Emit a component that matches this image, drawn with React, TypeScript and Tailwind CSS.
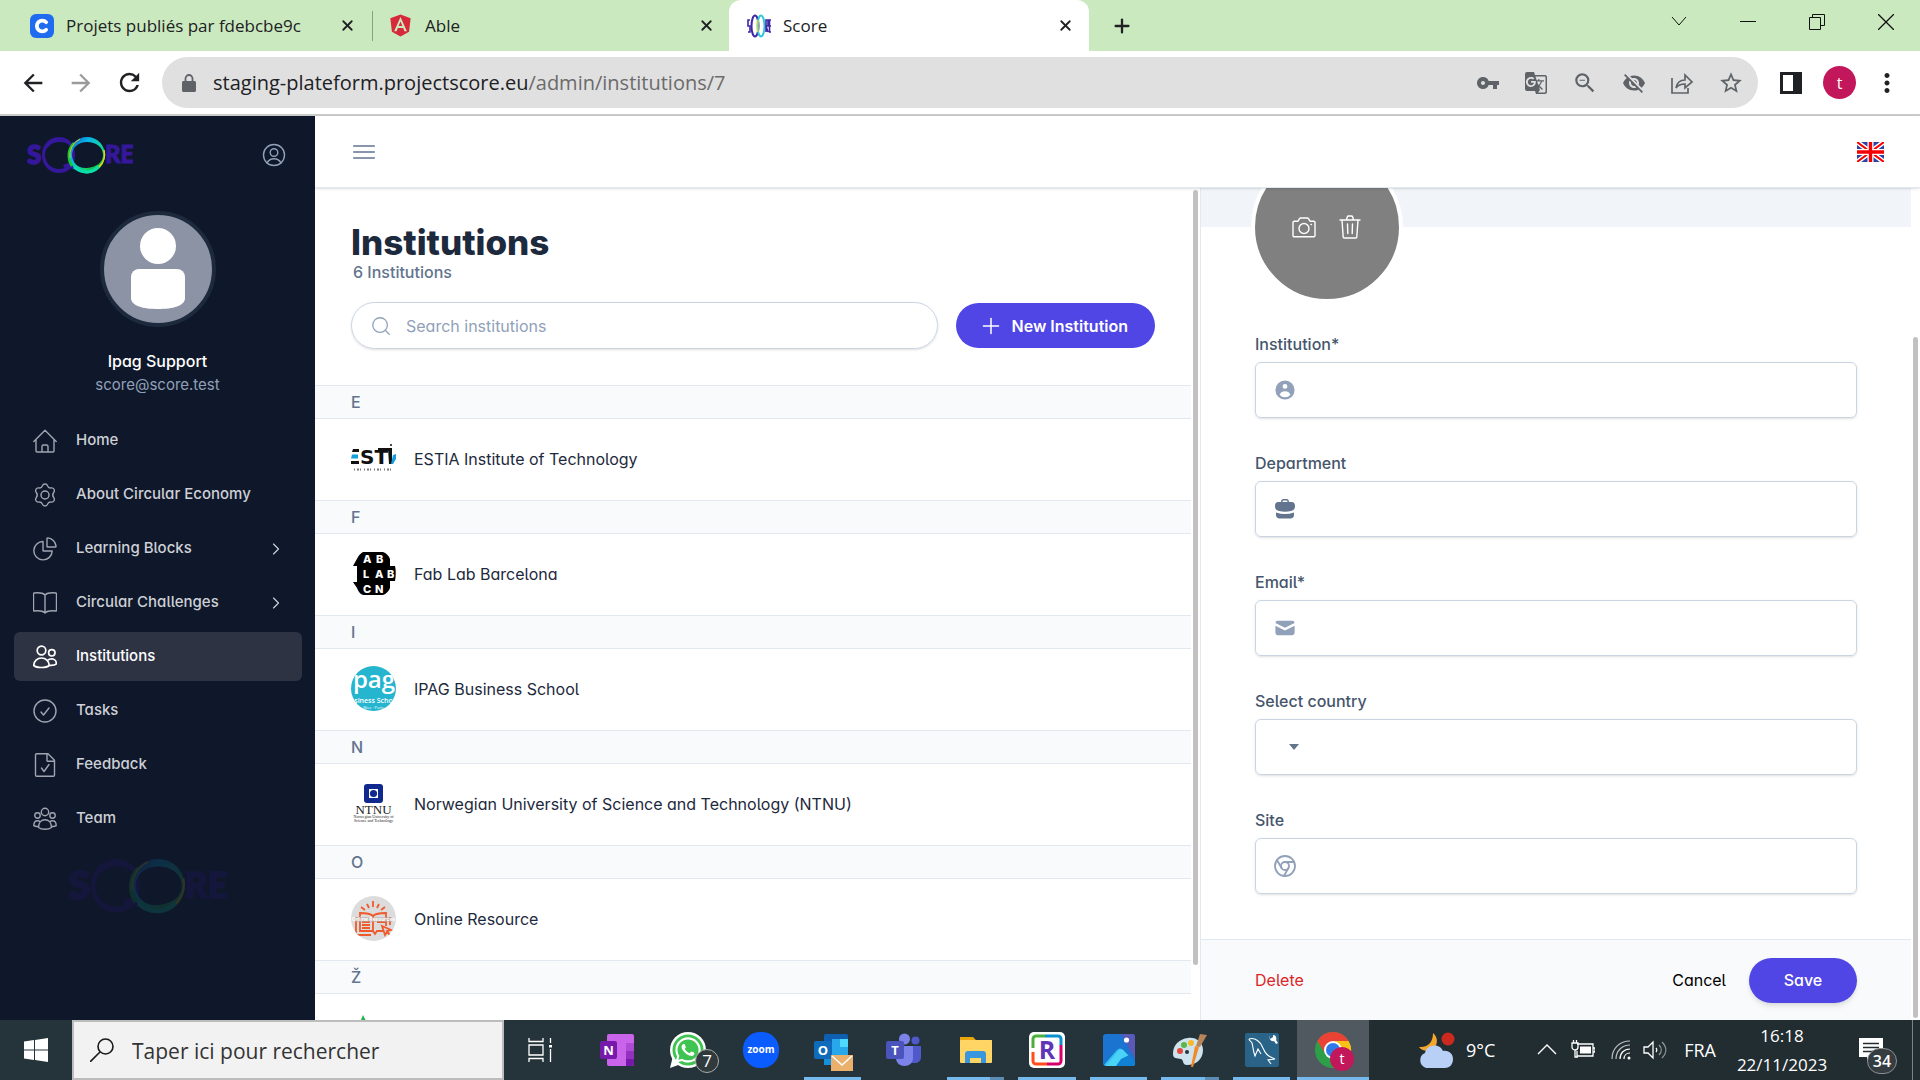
import React, { useState } from 'react';
import {
  MdArrowBack,
  MdArrowForward,
  MdRefresh,
  MdVpnKey,
  MdGTranslate,
  MdVisibilityOff,
  MdStarBorder,
  MdMoreVert,
  MdZoomOut,
} from 'react-icons/md';
import { HiMail, HiUserCircle } from 'react-icons/hi';
import { FaAngular, FaWhatsapp } from 'react-icons/fa';
import { Chrome, ChevronRight, Plus, Search, X } from 'lucide-react';

const ScoreLogo = ({ className }: { className: string }) => (
  <svg viewBox="0 0 106 37" className={className} role="img" aria-label="Score">
    <defs>
      <linearGradient id="ringCool" x1="0" y1="0" x2="1" y2="1">
        <stop offset="0" stopColor="#1d3fc4" />
        <stop offset="0.3" stopColor="#06b6e8" />
        <stop offset="0.55" stopColor="#12d4a8" />
        <stop offset="0.8" stopColor="#12c832" />
        <stop offset="1" stopColor="#e8dc1e" />
      </linearGradient>
    </defs>
    <g fill="#34179a" stroke="#34179a" fontFamily="Lato, sans-serif" fontWeight="900">
      <text x="0" y="27" fontSize="26" strokeWidth="1.500">S</text>
      <text x="78" y="26" fontSize="24" strokeWidth="1">RE</text>
    </g>
    <path
      fillRule="evenodd"
      fill="#34179a"
      d="M32 0c9 0 16 6 16 18S41 36 32 36 15 29 15 18 23 0 32 0zm1 5c-9 0-15 6-15 13s6 14 14 14 13-5 13-14S41 5 33 5z"
    />
    <path fill="#34179a" d="M36 28l10-4 1 9-3-2-5 3z" />
    <path
      fillRule="evenodd"
      fill="url(#ringCool)"
      d="M60 0c10 0 18 8 18 18s-8 18.500-18 18.500S42 28 42 18 50 0 60 0zm0 5c-9 0-15 6-15 13s6 14 15 13 16-5 16-13S69 5 60 5z"
    />
    <path d="M45 29A18 18 0 0 1 47 6" fill="none" stroke="#16c832" strokeWidth="2.500" />
    <path d="M43 21A18 18 0 0 1 53 2" fill="none" stroke="#e0c422" strokeWidth="1" />
    <path d="M47 30a18 18 0 0 0 13 5 17 17 0 0 0 12-6" fill="none" stroke="#0cdcb0" strokeWidth="3" />
    <path d="M77 13a18 18 0 0 1-5 17" fill="none" stroke="#e8d41e" strokeWidth="1.500" />
  </svg>
);

const LineIcon = ({ children, className = 'w-6 h-6' }: { children: React.ReactNode; className?: string }) => (
  <svg
    viewBox="0 0 24 24"
    className={className}
    fill="none"
    stroke="currentColor"
    strokeWidth="1.400"
    strokeLinecap="round"
    strokeLinejoin="round"
  >
    {children}
  </svg>
);

const navItems = [
  {
    label: 'Home',
    icon: (
      <LineIcon>
        <path d="M.8 12.500L12 1.200l11.200 11.300M3 10.500V22c0 .6.400 1 1 1h16c.6 0 1-.4 1-1V10.500M9 23v-5.500c0-1 .6-1.500 1.500-1.500h3c.9 0 1.500.5 1.500 1.500V23" />
      </LineIcon>
    ),
  },
  {
    label: 'About Circular Economy',
    icon: (
      <LineIcon>
        <circle cx="12" cy="12" r="4" />
        <path d="M9.400 2.900C10.200.400 13.800.400 14.600 2.900c.5 1.500 2 2.300 3.500 2 2.600-.5 4.400 2.600 2.600 4.600-1.100 1.400-1.100 3.600 0 5 1.800 2 0 5.100-2.600 4.600-1.500-.3-3 .5-3.500 2-.8 2.500-4.400 2.500-5.200 0-.5-1.500-2-2.300-3.500-2-2.600.5-4.400-2.600-2.600-4.600 1.100-1.400 1.100-3.600 0-5-1.800-2 0-5.100 2.600-4.600 1.500.3 3-.5 3.500-2z" />
      </LineIcon>
    ),
  },
  {
    label: 'Learning Blocks',
    arrow: true,
    icon: (
      <LineIcon>
        <path d="M10 4.500a9.200 9.200 0 1 0 9.200 9.500H10.500c-.3 0-.5-.2-.5-.5z" />
        <path d="M14 1.500c0-.4.300-.6.700-.6 4.300.3 7.900 4 8.400 8.400 0 .4-.2.700-.6.700h-8c-.3 0-.5-.2-.5-.5z" />
      </LineIcon>
    ),
  },
  {
    label: 'Circular Challenges',
    arrow: true,
    icon: (
      <LineIcon>
        <path d="M12 4v18M12 4C9.500 1.500 5.500 1.500 1 2c-.3 0-.5.200-.5.500v17c0 .3.200.5.500.5C5.500 19.500 9.500 19.500 12 22c2.500-2.500 6.500-2.500 11-2 .3 0 .5-.2.500-.5v-17c0-.3-.2-.5-.5-.5-4.500-.5-8.500-.5-11 2z" />
      </LineIcon>
    ),
  },
  {
    label: 'Institutions',
    active: true,
    icon: (
      <LineIcon>
        <g strokeWidth="1.700">
          <circle cx="8.500" cy="5.500" r="4.300" />
          <circle cx="18.800" cy="7.800" r="3.200" />
          <path d="M.8 20.500c0-4.500 3.500-7.500 7.700-7.500s7.700 3 7.700 7.500c-1.500 1.300-4.500 2-7.700 2s-6.200-.7-7.700-2z" />
          <path d="M14.500 15.500c1.200-1.200 2.800-1.600 4.300-1.600 2.600 0 4.600 2 4.600 5-1.500 1.500-4 1.700-7 1.500" />
        </g>
      </LineIcon>
    ),
  },
  {
    label: 'Tasks',
    icon: (
      <LineIcon>
        <circle cx="12" cy="12" r="11" />
        <path d="M8 13l2.500 3L16 9" />
      </LineIcon>
    ),
  },
  {
    label: 'Feedback',
    icon: (
      <LineIcon>
        <path d="M3.500.800H15l6.500 6.500V22c0 .7-.5 1.200-1.200 1.200H3.700c-.7 0-1.200-.5-1.200-1.200V2c0-.7.400-1.200 1-1.200zM14 1v6.500c0 .5.300.800.800.800h6.500M8.500 15l2.500 3.500 5-7" />
      </LineIcon>
    ),
  },
  {
    label: 'Team',
    icon: (
      <LineIcon>
        <circle cx="12" cy="5" r="3.700" />
        <circle cx="4.500" cy="8.500" r="2.700" />
        <circle cx="19.500" cy="8.500" r="2.700" />
        <path d="M5.500 20.500c0-4.500 2.500-7.700 6.500-7.700s6.500 3.200 6.500 7.700c-1.500 1.200-4 1.700-6.500 1.700s-5-.5-6.500-1.700zM5.500 19.500c-2 .2-3.500 0-4.700-.8 0-3 1.500-4.900 3.700-4.900 1 0 1.900.3 2.600 1M18.500 19.500c2 .2 3.500 0 4.700-.8 0-3-1.500-4.900-3.700-4.900-1 0-1.900.3-2.600 1" />
      </LineIcon>
    ),
  },
];

const EstiaLogo = () => (
  <svg viewBox="0 0 45 45" className="w-[45px] h-[45px] shrink-0">
    <text x="9" y="28" fontSize="20" fill="#111" fontFamily="DejaVu Sans, sans-serif" fontWeight="700">ST</text>
    <path d="M2 13h6v3H1zM0 25h8v3H0z" fill="#111" />
    <path d="M1 18.500h6v4H0z" fill="#129fe0" />
    <path d="M27 12h13v3H27zM37 12h4v16h-3z" fill="#111" />
    <circle cx="40" cy="9" r="1" fill="#111" />
    <path d="M42 19l3-1v5l-3 5h-2z" fill="#129fe0" />
    <path d="M3 33.500h38" stroke="#777" strokeWidth="2" strokeDasharray="1 2 2 1 1 3" />
  </svg>
);

const FabLabLogo = () => (
  <svg viewBox="0 0 45 45" className="w-[45px] h-[45px] shrink-0">
    <path d="M12 1h20c3 1 6 4 7 7v7h5c1 4 1 10 0 15h-5v7c-1 3-4 6-7 7H12c-3-1-5-4-6-7l-4-6h4V15H2l5-9c1-2 3-4 5-5z" fill="#000" />
    <g fill="#fff" fontFamily="Inter, sans-serif" fontWeight="800" fontSize="11">
      <text x="12" y="12">A</text>
      <text x="25" y="12">B</text>
      <text x="12" y="27">L</text>
      <text x="24" y="27">A</text>
      <text x="36" y="27">B</text>
      <text x="12" y="42">C</text>
      <text x="24" y="42">N</text>
    </g>
  </svg>
);

const IpagLogo = () => (
  <svg viewBox="0 0 45 45" className="w-[45px] h-[45px] shrink-0 rounded-full bg-[#26b5cf]">
    <g fill="#fff" fontFamily="Open Sans, sans-serif" textAnchor="middle">
      <text x="23" y="22" fontSize="24" fontWeight="600">pag</text>
      <text x="22.500" y="37" fontSize="7" fontWeight="600">siness Scho</text>
      <text x="22.500" y="43" fontSize="4">Nice · Paris</text>
    </g>
  </svg>
);

const NtnuLogo = () => (
  <svg viewBox="0 0 45 45" className="w-[45px] h-[45px] shrink-0">
    <rect x="13" y="3" width="19" height="19" rx="3" fill="#10298e" />
    <rect x="18" y="8" width="9" height="9" fill="#fff" />
    <circle cx="22.500" cy="12.500" r="3.600" fill="#10298e" />
    <g fill="#222" fontFamily="Liberation Serif, serif" textAnchor="middle">
      <text x="22.500" y="33" fontSize="13">NTNU</text>
      <text x="22.500" y="37" fontSize="4">Norwegian University of</text>
      <text x="22.500" y="41" fontSize="4">Science and Technology</text>
    </g>
  </svg>
);

const OnlineLogo = () => (
  <svg viewBox="0 0 45 45" className="w-[45px] h-[45px] shrink-0 rounded-full bg-[#dcdcdc]">
    <g fill="none" stroke="#f0592b" strokeWidth="1.800">
      <path d="M22 5v6M16 8l2 4M28 8l-2 4M10 11l4 3M34 11l-4 3" />
      <path d="M22 20c-3-3-8-3-13-3v18h13l2 3 2-3h6M22 20c3-3 8-3 13-3v13M5 21v18h15M39 21v8M22 20v15M11 26h8M11 29h8M11 32h8M26 26h8" />
      <path d="M31 30l9 4-4 1 3 4-3-3-2 3z" />
    </g>
    <path d="M4 21h37v5H4z" fill="#b5aca8" opacity="0.6" />
    <text x="22.500" y="25" fontSize="5" fontWeight="700" fill="#fff" textAnchor="middle" fontFamily="Inter, sans-serif">
      Online Resources
    </text>
  </svg>
);

const institutions = [
  { letter: 'E', name: 'ESTIA Institute of Technology', logo: <EstiaLogo /> },
  { letter: 'F', name: 'Fab Lab Barcelona', logo: <FabLabLogo /> },
  { letter: 'I', name: 'IPAG Business School', logo: <IpagLogo /> },
  { letter: 'N', name: 'Norwegian University of Science and Technology (NTNU)', logo: <NtnuLogo /> },
  { letter: 'O', name: 'Online Resource', logo: <OnlineLogo /> },
  {
    letter: 'Ž',
    name: '',
    logo: (
      <svg viewBox="0 0 45 45" className="w-[45px] h-[45px] shrink-0">
        <path d="M12 4l4 8-8 2z" fill="#22b14c" />
      </svg>
    ),
  },
];

const BrowserChrome = () => (
  <header className="shrink-0 text-[#202124] font-['Open_Sans',sans-serif]">
    <div className="flex h-[51px] bg-[#cbe9bf] text-[17px]">
      <div className="flex items-center w-[373px] pl-[30px] pr-[17px] relative">
        <span className="flex items-center justify-center w-6 h-6 rounded-md bg-[#1f6cf0]">
          <svg viewBox="0 0 24 24" className="w-5 h-5" fill="none" stroke="#fff" strokeWidth="4.500" strokeLinecap="round">
            <path d="M17 7.500a6.500 6.500 0 1 0 0 9" />
          </svg>
        </span>
        <span className="ml-3 flex-1 whitespace-nowrap">Projets publiés par fdebcbe9c</span>
        <button aria-label="Close tab">
          <X size={17} strokeWidth={2.5} />
        </button>
        <span className="absolute right-0 top-[11px] h-[30px] w-px bg-[#8aa182]" />
      </div>
      <div className="flex items-center w-[356px] pl-[15px] pr-3.5">
        <FaAngular size={25} color="#d6293a" />
        <span className="ml-3 flex-1">Able</span>
        <button aria-label="Close tab">
          <X size={17} strokeWidth={2.5} />
        </button>
      </div>
      <div className="bg-white">
        <div className="h-full w-2 rounded-br-lg bg-[#cbe9bf] -ml-2" />
      </div>
      <div className="flex items-center w-[360px] pl-[18px] pr-[15px] bg-white rounded-t-xl">
        <svg viewBox="0 0 24 24" className="w-6 h-6" fill="none">
          <ellipse cx="8" cy="12" rx="3.500" ry="10.500" stroke="#3f27a5" strokeWidth="2" />
          <ellipse cx="14" cy="12" rx="3.500" ry="10.500" stroke="#30c8d8" strokeWidth="2" />
          <path d="M10.800 6v12" stroke="#c6d83a" strokeWidth="1.500" />
          <path d="M3 6H1v6h2v6H1M19 18V6h2v6h-2l2 6M24 6h-1.500v12H24M22.500 12H24" stroke="#3f27a5" strokeWidth="1.600" />
        </svg>
        <span className="ml-3 flex-1">Score</span>
        <button aria-label="Close tab">
          <X size={17} strokeWidth={2.5} />
        </button>
      </div>
      <button aria-label="New tab" className="ml-[22px]">
        <Plus size={22} strokeWidth={2.5} />
      </button>
      <div className="ml-auto flex items-start pt-3.5 pr-[26px] gap-[53px]">
        <button aria-label="Search tabs">
          <svg viewBox="0 0 16 16" className="w-4 h-4" fill="none" stroke="#111">
            <path d="M1 3l7 8 7-8" />
          </svg>
        </button>
        <button aria-label="Minimize">
          <svg viewBox="0 0 16 16" className="w-4 h-4" fill="none" stroke="#111">
            <path d="M0 7.500h16" />
          </svg>
        </button>
        <button aria-label="Restore">
          <svg viewBox="0 0 16 16" className="w-4 h-4" fill="none" stroke="#111">
            <path d="M.5 3.500h11v12H.5zM3.500 3.500v-3h12v11h-4" />
          </svg>
        </button>
        <button aria-label="Close">
          <svg viewBox="0 0 16 16" className="w-4 h-4" fill="none" stroke="#111" strokeWidth="1.300">
            <path d="M0 0l16 16M16 0L0 16" />
          </svg>
        </button>
      </div>
    </div>
    <div className="flex items-center h-[65px] bg-white border-b-2 border-[#cbcbcb] pl-[19px]">
      <button aria-label="Back" className="w-12">
        <MdArrowBack size={28} />
      </button>
      <button aria-label="Forward" className="w-12 text-[#9b9b9b]">
        <MdArrowForward size={28} />
      </button>
      <button aria-label="Reload" className="w-[47px]">
        <MdRefresh size={29} />
      </button>
      <div className="flex items-center flex-1 h-[51px] rounded-full bg-[#e0e0e0] pl-5 pr-3.5 text-[#5f6368]">
        <svg viewBox="0 0 14 18" className="w-3.5 h-[18px]">
          <path d="M1.500 7h11c.8 0 1.500.6 1.500 1.500v8c0 .8-.7 1.500-1.500 1.500h-11C.7 18 0 17.300 0 16.500v-8C0 7.600.7 7 1.500 7z" fill="currentColor" />
          <path d="M3.500 8V4.500a3.500 3.500 0 0 1 7 0V8" fill="none" stroke="currentColor" strokeWidth="1.800" />
        </svg>
        <div className="ml-[17px] flex-1 text-xl whitespace-nowrap text-[#6b6b6b]">
          <span className="text-[#202124]">staging-plateform.projectscore.eu</span>/admin/institutions/7
        </div>
        <div className="flex items-center gap-6">
          <MdVpnKey size={24} />
          <MdGTranslate size={24} />
          <MdZoomOut size={26} />
          <MdVisibilityOff size={24} />
          <svg viewBox="0 0 24 24" className="w-6 h-6" fill="none" stroke="currentColor" strokeWidth="1.700">
            <path d="M2 7v15h16v-5M6 17c1-6 4-8 9-8V4l7 7-7 6v-4c-4 0-7 1-9 4z" />
          </svg>
          <MdStarBorder size={26} />
        </div>
      </div>
      <svg viewBox="0 0 22 22" className="w-[22px] h-[22px] ml-[22px]">
        <path d="M0 0h22v22H0zM3 3v16h10V3z" fillRule="evenodd" fill="#202124" />
      </svg>
      <span className="flex items-center justify-center w-[33px] h-[33px] ml-[21px] rounded-full bg-[#c2185b] text-white text-base">
        t
      </span>
      <button aria-label="Menu" className="ml-4 mr-[18px]">
        <MdMoreVert size={30} />
      </button>
    </div>
  </header>
);

const Sidebar = () => (
  <aside className="flex flex-col w-[315px] shrink-0 bg-[#0f172a] pt-[21px] overflow-hidden">
    <div className="flex items-center justify-between h-[37px] pl-[27px] pr-[29px]">
      <ScoreLogo className="w-[106px] h-[37px]" />
      <button aria-label="Profile" className="pb-0.5 text-slate-400">
        <LineIcon>
          <circle cx="12" cy="12" r="10.500" />
          <circle cx="12" cy="9.500" r="3.800" />
          <path d="M5 20c1.500-3 4-4.200 7-4.200s5.500 1.200 7 4.200" />
        </LineIcon>
      </button>
    </div>
    <div className="flex flex-col items-center mt-[37px]">
      <svg viewBox="0 0 108 108" className="w-[116px] h-[116px] rounded-full border-4 border-slate-800 bg-[#8b93a5]">
        <circle cx="54" cy="31" r="18" fill="#fff" />
        <path d="M35 54h38a8 8 0 0 1 8 8v21c0 8-12 11-27 11s-27-3-27-11V62a8 8 0 0 1 8-8z" fill="#fff" />
      </svg>
      <div className="mt-[22px] leading-6 font-medium text-white">Ipag Support</div>
      <div className="leading-6 text-[15px] text-slate-400">score@score.test</div>
    </div>
    <nav className="flex flex-col gap-[5px] mt-[19px] pl-3.5 pr-[13px]">
      {navItems.map((item) => (
        <a
          key={item.label}
          href="#"
          className={`flex items-center h-[49px] pl-[19px] pr-4 rounded-md text-[15px] font-medium ${
            item.active ? 'bg-[#2e3344] text-white' : 'text-[#cdd0d6]'
          }`}
        >
          <span className={item.active ? '' : 'text-[#a0a5b0]'}>{item.icon}</span>
          <span className="ml-[19px] flex-1">{item.label}</span>
          {item.arrow && <ChevronRight size={20} strokeWidth={1.4} />}
        </a>
      ))}
    </nav>
    <div className="mt-4 pl-[68px] opacity-15">
      <ScoreLogo className="w-[159px] h-[55px]" />
    </div>
  </aside>
);

const TopBar = () => (
  <div className="relative z-10 flex items-center justify-between h-[72px] shrink-0 bg-white border-b border-slate-200 shadow-sm pl-9 pr-9">
    <button aria-label="Toggle navigation">
      <LineIcon className="w-[26px] h-[26px] text-slate-500">
        <path d="M2.500 6.500h19M2.500 12h19M2.500 17.500h19" />
      </LineIcon>
    </button>
    <button aria-label="Language">
      <svg viewBox="0 0 27 20" className="w-[27px] h-5">
        <path d="M0 0h27v20H0z" fill="#2e42a5" />
        <path d="M0 0l27 20M27 0L0 20" stroke="#fff" strokeWidth="5" />
        <path d="M0 0l27 20M27 0L0 20" stroke="#f50100" strokeWidth="2" />
        <path d="M13.500 0v20M0 10h27" stroke="#fff" strokeWidth="6" />
        <path d="M13.500 0v20M0 10h27" stroke="#f50100" strokeWidth="3.400" />
      </svg>
    </button>
  </div>
);

const InstitutionList = () => {
  const [query, setQuery] = useState('');

  return (
    <section className="relative flex-1 min-w-0 pr-[9px] overflow-hidden">
      <div className="pt-[34px] pl-9 pr-9">
        <h1 className="text-[35px] leading-10 font-extrabold text-slate-800">Institutions</h1>
        <p className="pl-0.5 leading-5 font-medium text-slate-500">6 Institutions</p>
        <div className="flex items-center gap-[18px] mt-5">
          <label className="flex items-center flex-1 h-[47px] rounded-full border border-slate-300 shadow-sm pl-[18px]">
            <Search size={22} strokeWidth={1.4} className="text-slate-400" />
            <input
              aria-label="Search institutions"
              placeholder="Search institutions"
              value={query}
              onChange={(e) => setQuery(e.target.value)}
              className="ml-3.5 flex-1 outline-none placeholder:text-slate-400"
            />
          </label>
          <button className="flex items-center h-[45px] pl-[22px] pr-[27px] rounded-full bg-[#4f46e5] text-white font-semibold">
            <Plus size={26} strokeWidth={1.4} />
            <span className="ml-2">New Institution</span>
          </button>
        </div>
      </div>
      <div className="mt-9">
        {institutions.map((item) => (
          <div key={item.letter}>
            <div className="h-[34px] pl-9 leading-8 font-medium text-slate-500 bg-slate-50 border-y border-slate-200">
              {item.letter}
            </div>
            <a href="#" className="flex items-center h-[81px] pb-0.5 pl-9 gap-[18px] text-slate-800">
              {item.logo}
              <span>{item.name}</span>
            </a>
          </div>
        ))}
      </div>
      <div className="absolute right-[2px] top-0.5 w-[5px] h-[775px] rounded-full bg-[#c2c0c0]" />
    </section>
  );
};

const fields = [
  { id: 'institution', label: 'Institution*', icon: <HiUserCircle size={24} /> },
  {
    id: 'department',
    label: 'Department',
    icon: (
      <svg viewBox="0 0 24 24" className="w-6 h-6 text-slate-500" fill="currentColor">
        <path d="M8 5c0-2 1-3 2.500-3h3C15 2 16 3 16 5h2.500C21 5 22 6.500 22 9c0 3-1.500 4.500-4 5-4 1-8 1-12 0-2.500-.5-4-2-4-5 0-2.500 1-4 3.500-4zm1.500 0h5c0-1-.3-1.500-1-1.500h-3c-.7 0-1 .5-1 1.500z" />
        <path d="M3 15.500c6 2 12 2 18 0V18c0 2-1.500 3.500-3.500 3.500h-11C4.500 21.500 3 20 3 18z" />
      </svg>
    ),
  },
  { id: 'email', label: 'Email*', icon: <HiMail size={24} /> },
  { id: 'country', label: 'Select country', select: true },
  { id: 'site', label: 'Site', icon: <Chrome size={24} strokeWidth={1.8} /> },
];

const InstitutionForm = () => (
  <section className="relative flex flex-col w-[720px] shrink-0 pr-[9px] border-l border-slate-200 overflow-hidden">
    <div className="h-[39px] shrink-0 bg-slate-100" />
    <div className="px-[50px] -mt-[76px]">
      <div className="flex items-center justify-center gap-[22px] w-[152px] h-[152px] border-4 border-white rounded-full bg-[#808080] text-white">
        <button aria-label="Upload photo">
          <LineIcon>
            <path d="M1 7.500c0-.8.500-1.300 1.300-1.300H6l1.500-2.500c.3-.5.600-.7 1.200-.7h6.600c.6 0 .9.200 1.200.7L18 6.200h3.700c.8 0 1.300.5 1.300 1.300v13c0 .8-.5 1.300-1.300 1.300H2.300c-.8 0-1.300-.5-1.300-1.300z" />
            <circle cx="12" cy="13.500" r="5" />
            <path d="M19 9.500h.5" />
          </LineIcon>
        </button>
        <button aria-label="Delete photo">
          <LineIcon>
            <path d="M2 5h20M4 5l1.200 17c0 .6.500 1 1.100 1h11.400c.6 0 1.100-.4 1.100-1L20 5M8.500 5l.8-3c.2-.6.600-1 1.200-1h3c.6 0 1 .4 1.200 1l.8 3M9.500 9l.3 9.500M14.500 9l-.3 9.500" />
          </LineIcon>
        </button>
      </div>
    </div>
    <form className="flex flex-col gap-[33px] pt-[29px] px-[54px]">
      {fields.map((field) => (
        <div key={field.id}>
          <label htmlFor={field.id} className="block leading-6 mb-1.5 font-medium text-slate-600">
            {field.label}
          </label>
          <div className="flex items-center h-14 rounded-md border border-slate-300 shadow-sm pl-[17px] text-slate-400">
            {field.select ? (
              <>
                <svg viewBox="0 0 10 6" className="w-2.5 h-1.5 ml-4">
                  <path d="M0 0h10L5 6z" fill="#64748b" />
                </svg>
                <select id={field.id} className="flex-1 h-full appearance-none outline-none">
                  <option value=""></option>
                </select>
              </>
            ) : (
              <>
                {field.icon}
                <input id={field.id} className="flex-1 h-full ml-3 outline-none" />
              </>
            )}
          </div>
        </div>
      ))}
    </form>
    <div className="flex items-center h-[81px] shrink-0 mt-auto px-[54px] border-t border-slate-200 bg-slate-50">
      <button className="text-[#dc2626]">Delete</button>
      <button className="ml-auto text-black">Cancel</button>
      <button className="ml-[23px] w-[108px] h-[45px] rounded-full bg-[#4f46e5] text-white font-medium shadow-md">
        Save
      </button>
    </div>
    <div className="absolute right-[2px] bottom-0.5 w-[5px] h-[681px] rounded-full bg-[#c2c0c0]" />
  </section>
);

const winFont = 'Open Sans, sans-serif';

const taskbarApps = [
  {
    name: 'OneNote',
    line: '',
    icon: (
      <>
        <rect x="9" y="4" width="27" height="32" rx="2" fill="#ca64ea" />
        <path d="M28 13h8v8h-8z" fill="#ae4bd5" />
        <path d="M28 21h8v8h-8z" fill="#9332bf" />
        <path d="M28 29h8v5a2 2 0 0 1-2 2h-6z" fill="#7719aa" />
        <rect x="2" y="11" width="17" height="18" rx="2" fill="#7719aa" />
        <text x="10.500" y="25" fontSize="13" fontWeight="700" fill="#fff" textAnchor="middle" fontFamily={winFont}>N</text>
      </>
    ),
  },
  {
    name: 'WhatsApp',
    line: '',
    icon: (
      <>
        <circle cx="19" cy="20" r="18" fill="#fff" />
        <path d="M1 38l3-12 8 8z" fill="#fff" />
        <circle cx="19" cy="20" r="15.500" fill="#3fc351" />
        <g transform="translate(4.500 5.500)">
          <FaWhatsapp size={29} color="#fff" />
        </g>
        <circle cx="38" cy="31" r="11.500" fill="#303a3d" stroke="#aaa" />
        <text x="38" y="37" fontSize="17" fill="#fff" textAnchor="middle" fontFamily={winFont}>7</text>
      </>
    ),
  },
  {
    name: 'Zoom',
    line: '',
    icon: (
      <>
        <rect x="2" y="2" width="36" height="36" rx="17" fill="#0b5cff" />
        <text x="20" y="23" fontSize="10" fontWeight="700" fill="#fff" textAnchor="middle" fontFamily={winFont}>zoom</text>
      </>
    ),
  },
  {
    name: 'Outlook',
    line: 'full',
    icon: (
      <>
        <rect x="12" y="4" width="24" height="31" rx="2" fill="#0f5fb0" />
        <path d="M20 9h16v18H20z" fill="#28a8ea" />
        <path d="M28 9h8v8h-8z" fill="#50d9ff" />
        <path d="M12 24l24 2v9H12z" fill="#1490df" />
        <rect x="2" y="11" width="18" height="18" rx="2" fill="#0f6cbd" />
        <text x="11" y="25" fontSize="13" fontWeight="700" fill="#fff" textAnchor="middle" fontFamily={winFont}>O</text>
        <path d="M19 25h22v16H19z" fill="#eab06c" />
        <path d="M20 26l10 9 10-9" fill="none" stroke="#fff" strokeWidth="1.500" />
      </>
    ),
  },
  {
    name: 'Teams',
    line: '',
    icon: (
      <>
        <circle cx="31.500" cy="10.500" r="4" fill="#5059c9" />
        <path d="M26 16h11v11c0 4-3 6-6 6h-5z" fill="#5059c9" />
        <circle cx="20.500" cy="9" r="5.500" fill="#7b83eb" />
        <path d="M12 16h17v12c0 5-4 8-8.500 8S12 33 12 28z" fill="#7b83eb" />
        <rect x="2" y="11" width="18" height="18" rx="2" fill="#4b53bc" />
        <text x="11" y="25" fontSize="13" fontWeight="700" fill="#fff" textAnchor="middle" fontFamily={winFont}>T</text>
      </>
    ),
  },
  {
    name: 'Explorer',
    line: 'split',
    icon: (
      <>
        <path d="M4 7h13l3 3h16v8H4z" fill="#e8a60c" />
        <rect x="4" y="10" width="32" height="23" rx="1" fill="#ffd665" />
        <path d="M9 24a3 3 0 0 1 3-3h15a3 3 0 0 1 3 3v9h-5v-5H14v5H9z" fill="#3a97dd" />
      </>
    ),
  },
  {
    name: 'R',
    line: 'full',
    icon: (
      <>
        <rect x="2" y="2" width="36" height="36" rx="5" fill="#fff" />
        <g fill="none" strokeWidth="3">
          <path d="M6 18V9a3 3 0 0 1 3-3h9" stroke="#4caf3c" />
          <path d="M18 6h13a3 3 0 0 1 3 3v6" stroke="#0a8fd0" />
          <path d="M34 15v16a3 3 0 0 1-3 3H20" stroke="#d6006c" />
          <path d="M20 34H9a3 3 0 0 1-3-3V22" stroke="#ff4c18" />
        </g>
        <text x="20" y="29" fontSize="25" fontWeight="700" fill="#6135b8" textAnchor="middle" fontFamily={winFont}>R</text>
      </>
    ),
  },
  {
    name: 'Photos',
    line: 'full',
    icon: (
      <>
        <rect x="4" y="4" width="32" height="32" rx="3" fill="#1b75d0" />
        <path d="M22 4h11a3 3 0 0 1 3 3v22z" fill="#5b59b8" />
        <circle cx="27.500" cy="10" r="2.600" fill="#fff" />
        <path d="M5 35l13-15c2-2 4-2 6 0l12 13a3 3 0 0 1-3 3H7z" fill="#35c4f2" />
        <path d="M20 20L7 36h14l5-6 4-4-6-6c-1-1-3-1-4 0z" fill="#4bd3f7" />
        <path d="M22 29l8-4 6 7a3 3 0 0 1-3 4H17z" fill="#1181d6" />
      </>
    ),
  },
  {
    name: 'Paint',
    line: 'split',
    icon: (
      <>
        <path d="M18 8c8-1 15 4 15 12 0 9-7 15-16 15-5 0-3-5-6-6-4-1-8 0-8-5C3 15 9 9 18 8z" fill="#cfe3ee" />
        <circle cx="10" cy="21" r="3" fill="#e5483c" />
        <circle cx="14" cy="15" r="3" fill="#5cb648" />
        <circle cx="21" cy="13" r="3" fill="#f6b92c" />
        <circle cx="17" cy="22" r="2" fill="#26343a" />
        <path d="M21 37l4-21 4 1-6 20z" fill="#f08a24" />
        <path d="M26 16l4-12 7 1-7 12z" fill="#b98456" />
      </>
    ),
  },
  {
    name: 'Workbench',
    line: 'full',
    icon: (
      <>
        <rect x="3" y="3" width="34" height="34" rx="2" fill="#2a6388" />
        <path d="M7 9c6-2 12 3 14 9 2 5 4 8 12 11l-7 1 3 4M7 9c0 2 2 2 3 4 1 3 1 8 3 13l3-7 3 5" fill="none" stroke="#fff" strokeWidth="1.100" />
        <path d="M27 5l1 4 3-2v-2c3 0 4 3 3 5l2 3-2 1-2-3c-3 1-5-2-5-6z" fill="#fff" />
      </>
    ),
  },
  {
    name: 'Chrome',
    line: 'active',
    icon: (
      <>
        <circle cx="20" cy="20" r="18" fill="#2c9f48" />
        <path d="M4.400 11A18 18 0 0 1 35.600 11L20 12l-7.500 12z" fill="#ea4335" />
        <path d="M35.600 11A18 18 0 0 1 20 38l8-14-8-13z" fill="#fbc116" />
        <circle cx="20" cy="20" r="9" fill="#fff" />
        <circle cx="20" cy="20" r="7" fill="#2f7ae8" />
        <circle cx="29" cy="29" r="12" fill="#c2185b" />
        <text x="29" y="34" fontSize="14" fill="#fff" textAnchor="middle" fontFamily={winFont}>t</text>
      </>
    ),
  },
];

const Taskbar = () => (
  <footer className="flex items-center h-[60px] shrink-0 bg-[#25343a] text-white text-lg font-['Open_Sans',sans-serif]">
    <button aria-label="Start" className="w-[72px] flex justify-center">
      <svg viewBox="0 0 24 24" className="w-6 h-6" fill="#fff">
        <path d="M0 3.500l10-1.400v9.400H0zM11 2l13-2v11.500H11zM0 12.500h10v9.400L0 20.500zM11 12.500h13V24l-13-2z" />
      </svg>
    </button>
    <label className="flex items-center w-[432px] h-full bg-[#f2f2f2] border-2 border-[#bdbdbd] pl-4">
      <svg viewBox="0 0 24 24" className="w-6 h-6" fill="none" stroke="#1a1a1a" strokeWidth="1.600">
        <circle cx="15.500" cy="8.500" r="7.500" />
        <path d="M10 14L0 24" />
      </svg>
      <input
        aria-label="Taper ici pour rechercher"
        placeholder="Taper ici pour rechercher"
        className="ml-[18px] flex-1 pt-0.5 text-[21px] outline-none placeholder:text-[#333]"
      />
    </label>
    <button aria-label="Task view" className="w-[72px] mr-1.5 flex justify-center">
      <svg viewBox="0 0 24 24" className="w-6 h-6" fill="none" stroke="#fff" strokeWidth="1.300">
        <path d="M1 0v3.500h14V0M1 24v-3.500h14V24M1 7h14v10H1zM22.500 0v5M22.500 11v13" />
        <path d="M21 7h3v2.500h-3z" fill="#fff" stroke="none" />
      </svg>
    </button>
    <div className="flex w-[787px] h-full">
      {taskbarApps.map((app) => (
        <button
          key={app.name}
          aria-label={app.name}
          className={`relative flex-1 flex items-center justify-center ${app.line === 'active' ? 'bg-[#50595f]' : ''}`}
        >
          <svg viewBox="0 0 40 40" className="w-10 h-10 overflow-visible">
            {app.icon}
          </svg>
          {app.line === 'full' && <span className="absolute bottom-0 inset-x-[7px] h-[3px] bg-[#76b9ed]" />}
          {app.line === 'active' && <span className="absolute bottom-0 inset-x-0 h-[3px] bg-[#76b9ed]" />}
          {app.line === 'split' && (
            <span className="absolute bottom-0 inset-x-[7px] h-[3px] bg-[#76b9ed] border-r-[14px] border-[#5b8cb4]" />
          )}
        </button>
      ))}
    </div>
    <div className="flex items-center flex-1 h-full bg-[#222d31]">
      <svg viewBox="0 0 38 38" className="w-[38px] h-[38px] ml-12">
        <path d="M16 2c6 5 5 14-2 17-5 2-10 0-12-3 9 1 14-5 14-14z" fill="#f6a62b" />
        <path d="M9 37a8 8 0 0 1-1-15c1-8 14-11 18-2 6-1 10 3 10 8s-3 9-8 9z" fill="#b9d0f6" />
        <circle cx="31" cy="8" r="6.500" fill="#cc2a1e" />
      </svg>
      <span className="ml-[11px]">9°C</span>
      <div className="flex items-center ml-auto">
        <svg viewBox="0 0 20 20" className="w-5 h-5" fill="none" stroke="#fff" strokeWidth="1.400">
          <path d="M1 14l9-9 9 9" />
        </svg>
        <svg viewBox="0 0 24 20" className="w-6 h-5 ml-3.5" fill="none" stroke="#fff" strokeWidth="1.300">
          <path d="M6 4h16v12H6v-5M22 8h2v4h-2M1 3h6v4a3 3 0 0 1-6 0zM2.500 0v3M5.500 0v3M4 10v7h3" />
          <path d="M9 6.500h11v7H9z" fill="#fff" stroke="none" />
        </svg>
        <svg viewBox="0 0 20 20" className="w-5 h-5 ml-4" fill="none" stroke="#fff" strokeWidth="1.200">
          <path d="M1 19C1 8 9 1 19 1M5 19C5 11 11 5 19 5" opacity="0.7" />
          <path d="M9 19c0-6 4-10 10-10M13 19c0-3 2-6 6-6" />
          <circle cx="18" cy="18" r="1.500" fill="#fff" stroke="none" />
        </svg>
        <svg viewBox="0 0 24 20" className="w-6 h-5 ml-3" fill="none" stroke="#fff" strokeWidth="1.300">
          <path d="M1 7h4l5-5v16l-5-5H1zM13 8c1 1 1 3 0 4" />
          <path d="M16 5c3 3 3 7 0 10M19 2c5 5 5 11 0 16" opacity="0.5" />
        </svg>
        <span className="ml-[17px]">FRA</span>
        <div className="ml-[18px] w-[96px] text-center text-[17px] leading-[29px] whitespace-nowrap">
          <div>16:18</div>
          <div>22/11/2023</div>
        </div>
        <button aria-label="Notifications" className="relative ml-[29px] mr-[29px]">
          <svg viewBox="0 0 24 24" className="w-6 h-6">
            <path d="M0 0h24v19H12l-4 4v-4H0z" fill="#fff" />
            <path d="M4 5.500h16M4 9.500h16M4 13.500h10" stroke="#222d31" strokeWidth="1.300" />
          </svg>
          <span className="absolute left-2 top-2.5 flex items-center justify-center w-[30px] h-[26px] rounded-full border border-[#8a8f92] bg-[#363d41] text-base font-semibold">
            34
          </span>
        </button>
        <span className="h-[60px] w-px mr-[7px] bg-[#7a8285]" />
      </div>
    </div>
  </footer>
);

const App = () => (
  <div className="flex flex-col h-screen bg-white overflow-hidden text-base font-['Inter',sans-serif]">
    <BrowserChrome />
    <div className="flex flex-1 min-h-0 [font-feature-settings:'cv11','cv05']">
      <Sidebar />
      <main className="flex flex-col flex-1 min-w-0">
        <TopBar />
        <div className="flex flex-1 min-h-0">
          <InstitutionList />
          <InstitutionForm />
        </div>
      </main>
    </div>
    <Taskbar />
  </div>
);

export default App;
